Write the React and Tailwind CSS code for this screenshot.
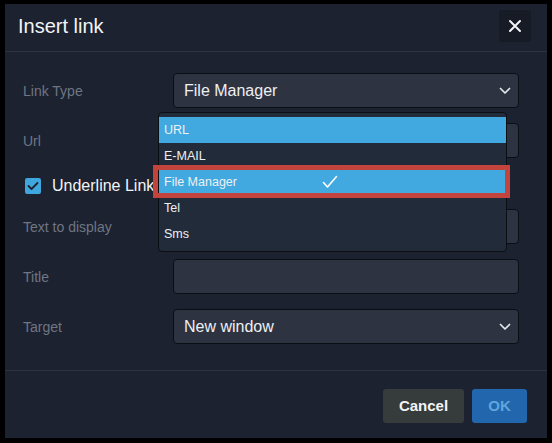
import React from "react";

const Chevron = () => (
  <svg width="12" height="8" viewBox="0 0 12 8" className="shrink-0">
    <path d="M1.5 1.5 L6 6 L10.5 1.5" fill="none" stroke="#e5e7eb" strokeWidth="1.7" strokeLinecap="round" strokeLinejoin="round" />
  </svg>
);

const Label = ({ children }) => (
  <div className="w-[150px] shrink-0 pt-[2px] text-[14px] text-[#6f7682]">{children}</div>
);

const Field = ({ children }) => (
  <div className="flex h-[35px] w-[346px] items-center justify-between rounded-[4px] border border-[#0b0e13] bg-[#2d3341] pl-[10px] pr-[7px] text-[16px] text-[#eef0f3]">
    {children}
  </div>
);

export default function App() {
  return (
    <div
      className="h-[443px] w-[552px] bg-black pl-[5px] pt-[4px]"
      style={{ fontFamily: "'Liberation Sans', Arial, sans-serif" }}
    >
      <div className="relative flex h-[434px] w-[542px] flex-col bg-[#1c2230]">
        {/* header */}
        <div className="box-border flex h-[48px] items-start justify-between border-b border-[#2c3341] pl-[13px] pr-[16px] pt-[6px]">
          <div className="text-[20px] leading-[32px] text-[#f3f4f6]">Insert link</div>
          <div className="flex h-[32px] w-[32px] items-center justify-center rounded-[3px] bg-[#161b25]">
            <svg width="14" height="14" viewBox="0 0 14 14">
              <path d="M2 2 L12 12 M12 2 L2 12" stroke="#f3f4f6" strokeWidth="2" strokeLinecap="round" />
            </svg>
          </div>
        </div>

        {/* body */}
        <div className="flex flex-col gap-[15px] border-b border-[#2c3341] pb-[26px] pl-[18px] pt-[21px]">
          <div className="flex items-center">
            <Label>Link Type</Label>
            <Field>
              <span>File Manager</span>
              <Chevron />
            </Field>
          </div>
          <div className="flex items-center">
            <Label>Url</Label>
            <Field />
          </div>
          <div className="flex h-[21px] items-center gap-[11px] pl-[2px] pt-[5px]">
            <div className="flex h-[16px] w-[16px] items-center justify-center rounded-[2px] bg-[#3fa6de]">
              <svg width="12" height="10" viewBox="0 0 12 10">
                <path d="M1.5 5 L4.5 8 L10.5 2" fill="none" stroke="#1c2230" strokeWidth="1.8" strokeLinecap="round" strokeLinejoin="round" />
              </svg>
            </div>
            <span className="text-[16px] text-[#f3f4f6]">Underline Link</span>
          </div>
          <div className="flex items-center">
            <Label>Text to display</Label>
            <Field />
          </div>
          <div className="flex items-center">
            <Label>Title</Label>
            <Field />
          </div>
          <div className="flex items-center">
            <Label>Target</Label>
            <Field>
              <span>New window</span>
              <Chevron />
            </Field>
          </div>
        </div>

        {/* footer */}
        <div className="flex justify-end gap-[8px] pr-[20px] pt-[18px]">
          <div className="flex h-[34px] w-[81px] items-center justify-center rounded-[3px] bg-[#363b3c] text-[15px] font-bold text-[#f3f4f6]">
            Cancel
          </div>
          <div className="flex h-[34px] w-[55px] items-center justify-center rounded-[3px] bg-[#2266ad] text-[15px] font-bold text-[#5ea6dc]">
            OK
          </div>
        </div>

        {/* dropdown menu */}
        <div className="absolute left-[153px] top-[108px] w-[349px] rounded-[4px] border border-[#0b0e13] bg-[#222b3a] pb-[4px] pt-[4px] text-[12.5px] text-[#eef0f3]">
          <div className="flex h-[26px] items-center bg-[#41a8e0] pl-[5px]">URL</div>
          <div className="flex h-[26px] items-center pl-[5px]">E-MAIL</div>
          <div className="relative flex h-[26px] items-center bg-[#41a8e0] pl-[5px]">
            File Manager
            <svg className="absolute left-[163px] top-[6px]" width="16" height="14" viewBox="0 0 16 14">
              <path d="M1.5 7.5 L5.5 12 L14.5 1.5" fill="none" stroke="#ffffff" strokeWidth="1.6" strokeLinecap="round" strokeLinejoin="round" />
            </svg>
          </div>
          <div className="flex h-[26px] items-center pl-[5px]">Tel</div>
          <div className="flex h-[26px] items-center pl-[5px]">Sms</div>
        </div>

        {/* red highlight box */}
        <div className="absolute left-[148px] top-[161px] h-[33px] w-[357px] border-[5px] border-[#c2443c]" />
      </div>
    </div>
  );
}
